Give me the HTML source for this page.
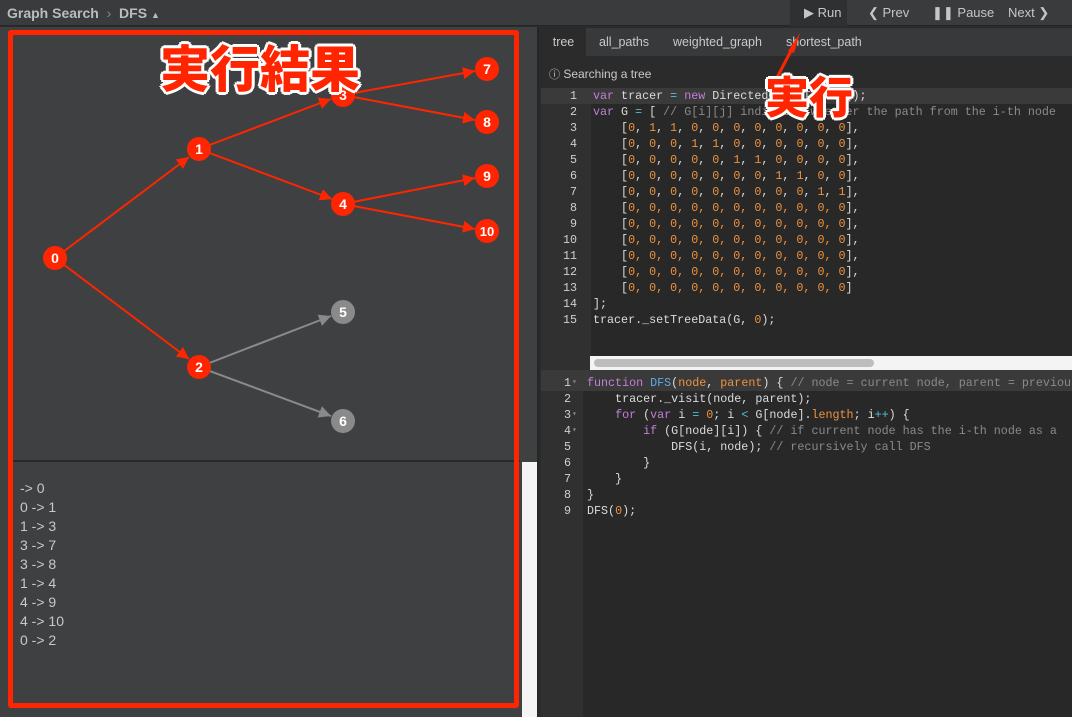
<!DOCTYPE html>
<html><head><meta charset="utf-8"><style>
*{margin:0;padding:0;box-sizing:border-box}
body{width:1072px;height:717px;overflow:hidden;background:#2b2b2b;font-family:"Liberation Sans",sans-serif;position:relative}
.top{position:absolute;left:0;top:0;width:1072px;height:26px;background:#3a3b3d;border-bottom:1px solid #262626}
.crumb{position:absolute;left:7px;top:5px;font-size:14px;font-weight:bold;color:#b9bcc0}
.btn{position:absolute;top:0;height:26px;line-height:26px;font-size:13px;color:#c4c6c9}
.left{position:absolute;left:0;top:27px;width:539px;height:690px;background:#3f4042;border-right:2px solid #262626}
.div{position:absolute;left:8px;top:460px;width:512px;height:2px;background:#2a2a2a}
.log{position:absolute;left:20px;top:479px;font-size:14px;line-height:19px;color:#c8c8c8}
.white{position:absolute;left:522px;top:462px;width:15px;height:255px;background:#f4f4f4}
.redbox{position:absolute;left:8px;top:30px;width:511px;height:678px;border:5px solid #ff2500;border-radius:3px}
.tabs{position:absolute;left:541px;top:28px;width:531px;height:28px;background:#38393a}
.tab{position:absolute;top:0;height:28px;line-height:28px;font-size:12.5px;color:#c9c9c9}
.desc{position:absolute;left:549px;top:66px;font-size:12px;color:#c9c9c9}
.ed{position:absolute;left:541px;background:#282828;font-family:"Liberation Mono",monospace;font-size:11.7px;overflow:hidden}
.gut{position:absolute;left:0;top:0;background:#303030;height:100%}
.ln{position:absolute;right:0;text-align:right;color:#d0d0d0;line-height:16px}
.code{position:absolute;white-space:pre;line-height:16px;color:#dcdcdc}
.k{color:#c27fd8}.o{color:#4fc1d6}.n{color:#f0913e}.c{color:#8a8a8a}.f{color:#5fa9e8}
.big{position:absolute;font-family:"Liberation Sans","Noto Sans CJK JP",sans-serif;font-weight:900;color:#ff2500;-webkit-text-stroke:0;text-shadow:0 0 2px #fff,2px 2px 0 #fff,-2px -2px 0 #fff,2px -2px 0 #fff,-2px 2px 0 #fff,3px 0 0 #fff,-3px 0 0 #fff,0 3px 0 #fff,0 -3px 0 #fff}
</style></head><body>
<div class="top">
<div class="crumb">Graph Search <span style="font-weight:normal;color:#888">&nbsp;›&nbsp;</span> DFS <span style="font-size:9px">▲</span></div>
<div class="btn" style="left:790px;width:57px;background:#2f3032;padding-left:14px">▶ Run</div>
<div class="btn" style="left:868px">❮ Prev</div>
<div class="btn" style="left:932px">❚❚ Pause</div>
<div class="btn" style="left:1008px">Next ❯</div>
</div>
<div class="left"></div>
<svg style="position:absolute;left:0;top:0" width="540" height="460">
<defs><marker id="a" viewBox="0 0 10 10" refX="10" refY="5" markerWidth="6" markerHeight="6" orient="auto"><path d="M0 0L10 5L0 10z" fill="#ff2500"/></marker>
<marker id="g" viewBox="0 0 10 10" refX="10" refY="5" markerWidth="6" markerHeight="6" orient="auto"><path d="M0 0L10 5L0 10z" fill="#8a8a8a"/></marker></defs>
<g stroke="#ff2500" stroke-width="2" marker-end="url(#a)">
<line x1="55" y1="258" x2="189" y2="157"/><line x1="55" y1="258" x2="189" y2="359"/>
<line x1="199" y1="149" x2="331" y2="99"/><line x1="199" y1="149" x2="332" y2="199"/>
<line x1="343" y1="95" x2="475" y2="71"/><line x1="343" y1="95" x2="475" y2="120"/>
<line x1="343" y1="204" x2="475" y2="178"/><line x1="343" y1="204" x2="475" y2="229"/>
</g>
<g stroke="#8a8a8a" stroke-width="2" marker-end="url(#g)">
<line x1="199" y1="367" x2="331" y2="316"/><line x1="199" y1="367" x2="331" y2="416"/>
</g>
<g font-family="Liberation Sans" font-weight="bold" font-size="14" fill="#fff" text-anchor="middle">
<circle cx="55" cy="258" r="12" fill="#ff2500"/><text x="55" y="263">0</text>
<circle cx="199" cy="149" r="12" fill="#ff2500"/><text x="199" y="154">1</text>
<circle cx="199" cy="367" r="12" fill="#ff2500"/><text x="199" y="372">2</text>
<circle cx="343" cy="95" r="12" fill="#ff2500"/><text x="343" y="100">3</text>
<circle cx="343" cy="204" r="12" fill="#ff2500"/><text x="343" y="209">4</text>
<circle cx="343" cy="312" r="12" fill="#8a8a8a"/><text x="343" y="317">5</text>
<circle cx="343" cy="421" r="12" fill="#8a8a8a"/><text x="343" y="426">6</text>
<circle cx="487" cy="69" r="12" fill="#ff2500"/><text x="487" y="74">7</text>
<circle cx="487" cy="122" r="12" fill="#ff2500"/><text x="487" y="127">8</text>
<circle cx="487" cy="176" r="12" fill="#ff2500"/><text x="487" y="181">9</text>
<circle cx="487" cy="231" r="12" fill="#ff2500"/><text x="487" y="236" font-size="13">10</text>
</g></svg>
<div class="div"></div>
<div class="white"></div>
<div class="log">-&gt; 0<br>0 -&gt; 1<br>1 -&gt; 3<br>3 -&gt; 7<br>3 -&gt; 8<br>1 -&gt; 4<br>4 -&gt; 9<br>4 -&gt; 10<br>0 -&gt; 2</div>
<div class="redbox"></div>
<div class="big" style="left:160px;top:40px;font-size:50px;line-height:60px">実行結果</div>

<div class="tabs">
<div class="tab" style="left:0;width:45px;background:#2b2b2b;text-align:center">tree</div>
<div class="tab" style="left:58px">all_paths</div>
<div class="tab" style="left:132px">weighted_graph</div>
<div class="tab" style="left:245px">shortest_path</div>
</div>
<div class="desc"><span style="font-size:11px">ⓘ</span> Searching a tree</div>

<div class="ed" style="top:88px;width:531px;height:282px">
<div class="gut" style="width:50px"></div>
<div style="position:absolute;left:0;top:0;width:531px;height:16px;background:#3a3a3a"></div>
<div class="ln" style="left:0;width:36px;top:0">1<br>2<br>3<br>4<br>5<br>6<br>7<br>8<br>9<br>10<br>11<br>12<br>13<br>14<br>15</div>
<div class="code" style="left:52px;top:0"><span class="k">var</span> tracer <span class="o">=</span> <span class="k">new</span> DirectedGraphTracer();
<span class="k">var</span> G <span class="o">=</span> [ <span class="c">// G[i][j] indicates whether the path from the i-th node</span>
    [<span class="n">0</span>, <span class="n">1</span>, <span class="n">1</span>, <span class="n">0</span>, <span class="n">0</span>, <span class="n">0</span>, <span class="n">0</span>, <span class="n">0</span>, <span class="n">0</span>, <span class="n">0</span>, <span class="n">0</span>],
    [<span class="n">0</span>, <span class="n">0</span>, <span class="n">0</span>, <span class="n">1</span>, <span class="n">1</span>, <span class="n">0</span>, <span class="n">0</span>, <span class="n">0</span>, <span class="n">0</span>, <span class="n">0</span>, <span class="n">0</span>],
    [<span class="n">0</span>, <span class="n">0</span>, <span class="n">0</span>, <span class="n">0</span>, <span class="n">0</span>, <span class="n">1</span>, <span class="n">1</span>, <span class="n">0</span>, <span class="n">0</span>, <span class="n">0</span>, <span class="n">0</span>],
    [<span class="n">0</span>, <span class="n">0</span>, <span class="n">0</span>, <span class="n">0</span>, <span class="n">0</span>, <span class="n">0</span>, <span class="n">0</span>, <span class="n">1</span>, <span class="n">1</span>, <span class="n">0</span>, <span class="n">0</span>],
    [<span class="n">0</span>, <span class="n">0</span>, <span class="n">0</span>, <span class="n">0</span>, <span class="n">0</span>, <span class="n">0</span>, <span class="n">0</span>, <span class="n">0</span>, <span class="n">0</span>, <span class="n">1</span>, <span class="n">1</span>],
    [<span class="n">0, 0, 0, 0, 0, 0, 0, 0, 0, 0, 0</span>],
    [<span class="n">0, 0, 0, 0, 0, 0, 0, 0, 0, 0, 0</span>],
    [<span class="n">0, 0, 0, 0, 0, 0, 0, 0, 0, 0, 0</span>],
    [<span class="n">0, 0, 0, 0, 0, 0, 0, 0, 0, 0, 0</span>],
    [<span class="n">0, 0, 0, 0, 0, 0, 0, 0, 0, 0, 0</span>],
    [<span class="n">0, 0, 0, 0, 0, 0, 0, 0, 0, 0, 0</span>]
];
tracer._setTreeData(G, <span class="n">0</span>);</div>
<div style="position:absolute;left:49px;top:268px;width:482px;height:14px;background:#f4f4f4"></div>
<div style="position:absolute;left:53px;top:271px;width:280px;height:8px;border-radius:4px;background:#bdbdbd"></div>
</div>
<div style="position:absolute;left:541px;top:370px;width:531px;height:5px;background:#3a3a3a"></div>
<div class="ed" style="top:375px;width:531px;height:342px">
<div class="gut" style="width:42px"></div>
<div style="position:absolute;left:0;top:0;width:531px;height:16px;background:#3a3a3a"></div>
<div class="ln" style="left:0;width:30px;top:0">1<br>2<br>3<br>4<br>5<br>6<br>7<br>8<br>9</div>
<div style="position:absolute;left:31px;top:0;line-height:16px;font-size:8px;color:#888">▾<br><br>▾<br>▾</div>
<div class="code" style="left:46px;top:0"><span class="k">function</span> <span class="f">DFS</span>(<span class="n">node</span>, <span class="n">parent</span>) { <span class="c">// node = current node, parent = previous</span>
    tracer._visit(node, parent);
    <span class="k">for</span> (<span class="k">var</span> i <span class="o">=</span> <span class="n">0</span>; i <span class="o">&lt;</span> G[node].<span class="n">length</span>; i<span class="o">++</span>) {
        <span class="k">if</span> (G[node][i]) { <span class="c">// if current node has the i-th node as a</span>
            DFS(i, node); <span class="c">// recursively call DFS</span>
        }
    }
}
DFS(<span class="n">0</span>);</div>
</div>

<svg style="position:absolute;left:750px;top:25px" width="70" height="70"><path d="M50 8 L38 26 L44 28 Z" fill="#ff2500"/><line x1="43" y1="22" x2="22" y2="62" stroke="#ff2500" stroke-width="3"/></svg>
<div class="big" style="left:765px;top:72px;font-size:44px;line-height:54px">実行</div>
</body></html>
